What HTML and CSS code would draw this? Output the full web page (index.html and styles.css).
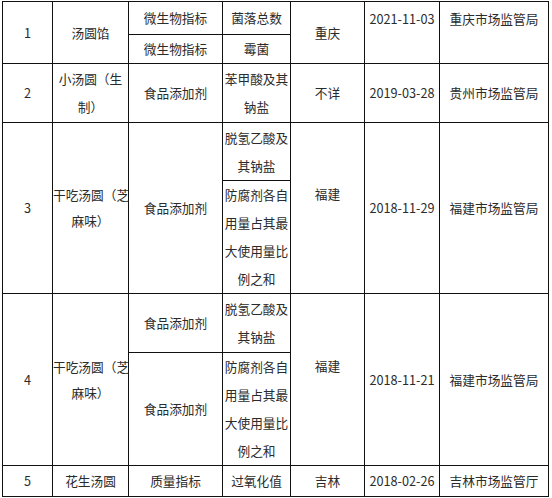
FILE: index.html
```html
<!DOCTYPE html>
<html lang="zh-CN">
<head>
<meta charset="utf-8">
<title>汤圆抽检不合格信息</title>
<link rel="stylesheet" href="styles.css">
</head>
<body>
<div class="page">
<table class="grid">
  <colgroup>
    <col class="c-no"><col class="c-name"><col class="c-cat"><col class="c-item"><col class="c-place"><col class="c-date"><col class="c-org">
  </colgroup>
  <tbody>
    <tr class="r1a">
      <td rowspan="2">1</td>
      <td rowspan="2">汤圆馅</td>
      <td>微生物指标</td>
      <td>菌落总数</td>
      <td rowspan="2">重庆</td>
      <td rowspan="2" class="raised">2021-11-03</td>
      <td rowspan="2" class="raised">重庆市场监管局</td>
    </tr>
    <tr class="r1b">
      <td>微生物指标</td>
      <td>霉菌</td>
    </tr>
    <tr class="r2">
      <td>2</td>
      <td>小汤圆（生<br>制）</td>
      <td>食品添加剂</td>
      <td>苯甲酸及其<br>钠盐</td>
      <td>不详</td>
      <td>2019-03-28</td>
      <td>贵州市场监管局</td>
    </tr>
    <tr class="r3a">
      <td rowspan="2">3</td>
      <td rowspan="2" class="tight">干吃汤圆（芝<br>麻味）</td>
      <td rowspan="2">食品添加剂</td>
      <td>脱氢乙酸及<br>其钠盐</td>
      <td rowspan="2" class="raised">福建</td>
      <td rowspan="2">2018-11-29</td>
      <td rowspan="2">福建市场监管局</td>
    </tr>
    <tr class="r3b">
      <td>防腐剂各自<br>用量占其最<br>大使用量比<br>例之和</td>
    </tr>
    <tr class="r4a">
      <td rowspan="2">4</td>
      <td rowspan="2" class="tight">干吃汤圆（芝<br>麻味）</td>
      <td>食品添加剂</td>
      <td>脱氢乙酸及<br>其钠盐</td>
      <td rowspan="2" class="raised">福建</td>
      <td rowspan="2">2018-11-21</td>
      <td rowspan="2">福建市场监管局</td>
    </tr>
    <tr class="r4b">
      <td>食品添加剂</td>
      <td>防腐剂各自<br>用量占其最<br>大使用量比<br>例之和</td>
    </tr>
    <tr class="r5">
      <td>5</td>
      <td>花生汤圆</td>
      <td>质量指标</td>
      <td>过氧化值</td>
      <td>吉林</td>
      <td>2018-02-26</td>
      <td>吉林市场监管厅</td>
    </tr>
  </tbody>
</table>
</div>
</body>
</html>
```

FILE: styles.css
```css
html, body {
  margin: 0;
  padding: 0;
  background: #ffffff;
}

.page {
  padding: 1px 0 0 2px;
}

.grid {
  border-collapse: collapse;
  table-layout: fixed;
  width: 547px;
  font-family: "Noto Sans CJK SC", "Noto Sans", sans-serif;
  font-size: 12.7px;
  color: #2b2b2b;
}

.grid td {
  border: 1px solid #111111;
  padding: 0;
  text-align: center;
  vertical-align: middle;
  line-height: 28px;
  white-space: nowrap;
  overflow: visible;
}

.c-no { width: 50px; }
.c-name { width: 76px; }
.c-cat { width: 94px; }
.c-item { width: 68px; }
.c-place { width: 74px; }
.c-date { width: 75px; }
.c-org { width: 109px; }

.grid td.tight {
  line-height: 26px;
}

.grid td.raised {
  padding-bottom: 28px;
}

.r1a { height: 33px; }
.r1b { height: 29px; }
.r2 { height: 59px; }
.r3a { height: 58px; }
.r3b { height: 112px; }
.r4a { height: 59px; }
.r4b { height: 113px; }
.r5 { height: 31px; }
```
